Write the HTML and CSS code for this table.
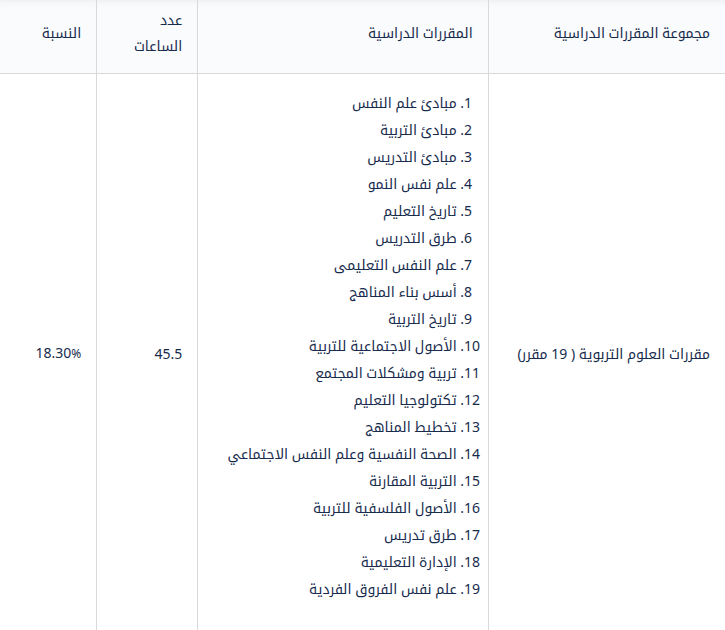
FILE: index.html
```html
<!DOCTYPE html>
<html lang="ar" dir="rtl">
<head>
<meta charset="utf-8">
<title>المقررات</title>
<link rel="stylesheet" href="styles.css">
</head>
<body>
<table class="courses">
  <thead>
    <tr>
      <th class="c-group">مجموعة المقررات الدراسية</th>
      <th class="c-list">المقررات الدراسية</th>
      <th class="c-hours">عدد الساعات</th>
      <th class="c-pct">النسبة</th>
    </tr>
  </thead>
  <tbody>
    <tr>
      <td class="c-group">مقررات العلوم التربوية ( 19 مقرر)</td>
      <td class="c-list">
        <ol class="list">
          <li>مبادئ علم النفس</li>
          <li>مبادئ التربية</li>
          <li>مبادئ التدريس</li>
          <li>علم نفس النمو</li>
          <li>تاريخ التعليم</li>
          <li>طرق التدريس</li>
          <li>علم النفس التعليمى</li>
          <li>أسس بناء المناهج</li>
          <li>تاريخ التربية</li>
          <li>الأصول الاجتماعية للتربية</li>
          <li>تربية ومشكلات المجتمع</li>
          <li>تكتولوجيا التعليم</li>
          <li>تخطيط المناهج</li>
          <li>الصحة النفسية وعلم النفس الاجتماعي</li>
          <li>التربية المقارنة</li>
          <li>الأصول الفلسفية للتربية</li>
          <li>طرق تدريس</li>
          <li>الإدارة التعليمية</li>
          <li>علم نفس الفروق الفردية</li>
        </ol>
      </td>
      <td class="c-hours">45.5</td>
      <td class="c-pct">18.30<span class="pct">%</span></td>
    </tr>
  </tbody>
</table>
</body>
</html>
```

FILE: styles.css
```css
html, body {
  margin: 0;
  padding: 0;
  background: #ffffff;
}

body {
  font-family: "Noto Sans", "Noto Kufi Arabic", "Noto Sans Arabic", "DejaVu Sans", sans-serif;
  font-size: 14px;
  color: #172b4d;
}

.courses {
  width: 725px;
  border-collapse: collapse;
  table-layout: fixed;
}

.courses th,
.courses td {
  text-align: right;
  vertical-align: middle;
  padding: 10px 15px;
  line-height: 27px;
  border-left: 1px solid #d9d9d9;
  font-weight: normal;
}

.courses th.c-pct,
.courses td.c-pct {
  border-left: none;
}

.courses thead th {
  background: #fafbfc;
  border-bottom: 1px solid #d9d9d9;
  height: 53px;
  padding: 6px 15px 14px;
  line-height: 26px;
  box-shadow: inset 0 8px 8px -8px rgba(0, 0, 0, 0.08);
}

.c-group { width: 206px; }
.c-list { width: 259px; }
.c-hours { width: 70px; }
.c-pct { width: 66px; }

.pct {
  font-size: 12px;
}

.list {
  margin: 5px 0 20px;
  padding: 0 16px 0 0;
}

.list li {
  line-height: 27px;
}
```
